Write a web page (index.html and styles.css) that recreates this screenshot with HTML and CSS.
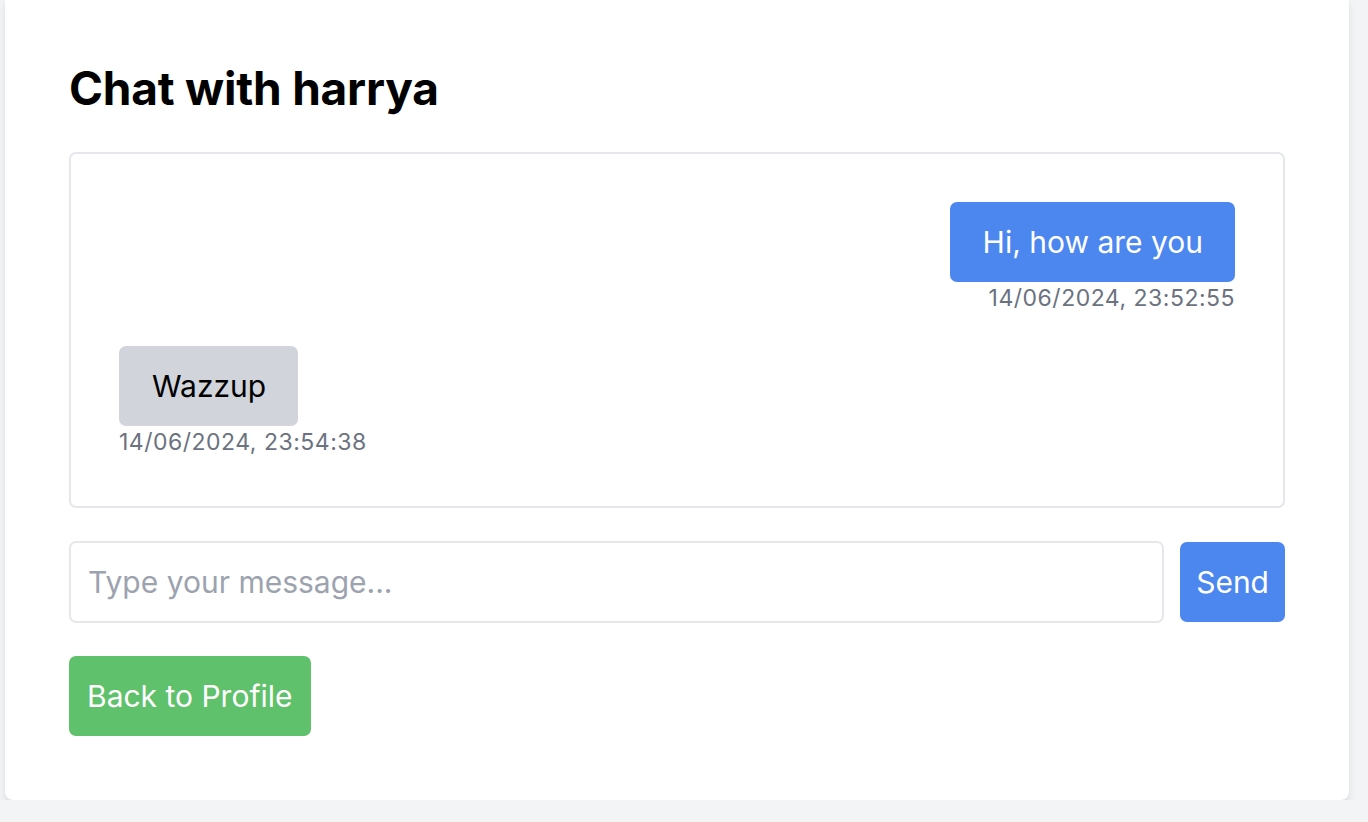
FILE: index.html
```html
<!DOCTYPE html>
<html lang="en">
<head>
<meta charset="utf-8">
<title>Chat with harrya</title>
<link rel="stylesheet" href="styles.css">
</head>
<body>
<div class="card">
  <h1 class="title">Chat with harrya</h1>
  <div class="chat-box">
    <div class="message sent">
      <div class="bubble">Hi, how are you</div>
      <div class="time">14/06/2024, 23:52:55</div>
    </div>
    <div class="message received">
      <div class="bubble">Wazzup</div>
      <div class="time">14/06/2024, 23:54:38</div>
    </div>
  </div>
  <form class="composer">
    <input class="composer-input" type="text" placeholder="Type your message...">
    <button class="btn btn-blue" type="button">Send</button>
  </form>
  <a class="btn btn-green" href="#">Back to Profile</a>
</div>
</body>
</html>
```

FILE: styles.css
```css
* { box-sizing: border-box; }
html, body { margin: 0; padding: 0; }
body {
  background: #f3f4f6;
  font-family: Inter, "Noto Sans", sans-serif;
  color: #000;
  overflow: hidden;
}
.card {
  margin: -8px 0 0 5px;
  width: 1344px;
  background: #fff;
  border-radius: 8px;
  padding: 64px;
  box-shadow: 0 8px 12px -2px rgba(0,0,0,0.1), 0 3px 6px -3px rgba(0,0,0,0.1);
}
.title {
  margin: 0 0 32px;
  font-size: 46px;
  line-height: 64px;
  font-weight: 700;
  letter-spacing: -0.2px;
}
.chat-box {
  border: 2px solid #e5e7eb;
  border-radius: 7px;
  padding: 48px;
  display: flex;
  flex-direction: column;
  gap: 32px;
  margin-bottom: 33px;
}
.message { display: flex; flex-direction: column; }
.message.sent { align-items: flex-end; }
.message.received { align-items: flex-start; }
.bubble {
  padding: 16px 32px 16px 33px;
  font-size: 30px;
  line-height: 48px;
  border-radius: 7px;
}
.sent .bubble { background: #4c86ef; color: #fff; }
.received .bubble { background: #d1d5db; color: #000; }
.time {
  font-size: 23px;
  line-height: 32px;
  letter-spacing: 0.5px;
  color: #6b7280;
}
.composer {
  display: flex;
  align-items: center;
  gap: 16px;
  margin: 0 0 33px;
}
.composer-input {
  flex: 1;
  height: 82px;
  border: 2px solid #e5e7eb;
  border-radius: 7px;
  padding: 0 17px;
  font-family: inherit;
  font-size: 30px;
  color: #000;
  outline: none;
}
.composer-input::placeholder { color: #9ca3af; }
.btn {
  display: inline-block;
  border: 0;
  border-radius: 7px;
  padding: 16px 18px;
  font-family: inherit;
  font-size: 30px;
  line-height: 48px;
  color: #fff;
  text-decoration: none;
}
.btn-blue { background: #4c86ef; padding: 16px 16px; }
.btn-green { background: #5fc16b; }
```
